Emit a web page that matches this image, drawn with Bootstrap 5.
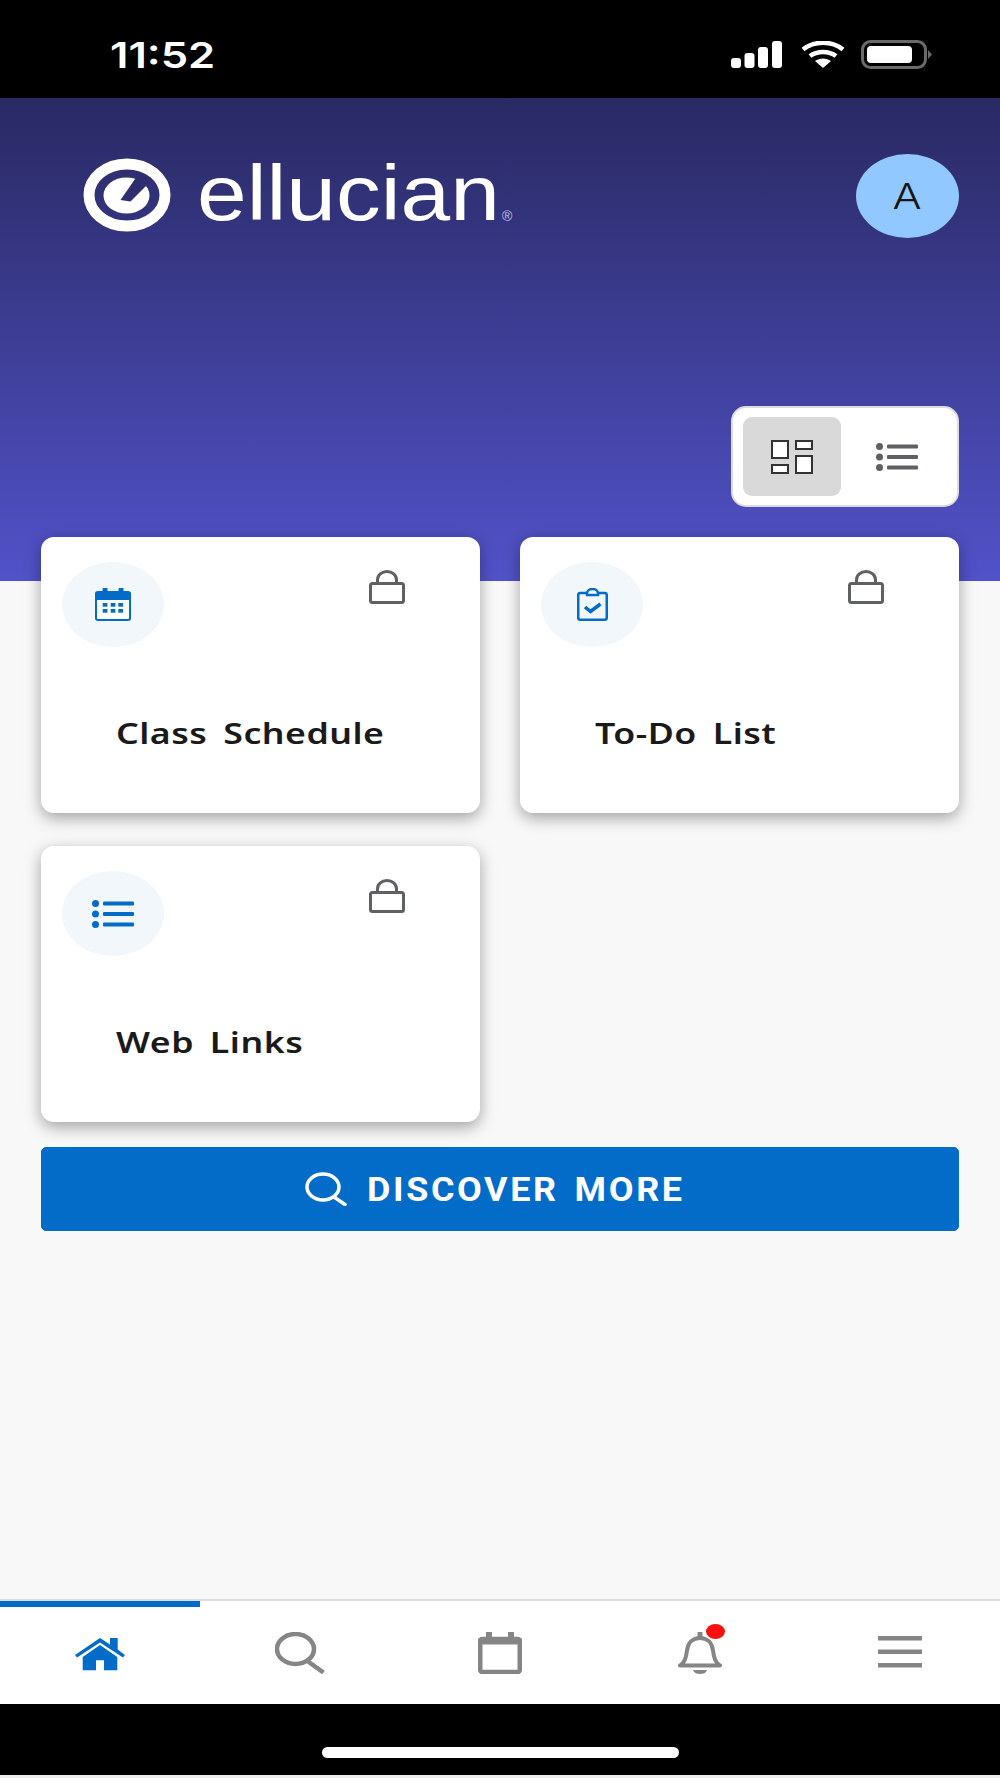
<!DOCTYPE html>
<html lang="en">
<head>
  <meta charset="UTF-8" />
  <meta name="viewport" content="width=device-width, initial-scale=1" />
  <title>Ellucian Experience</title>
  <link href="https://cdn.jsdelivr.net/npm/bootstrap@5.3.3/dist/css/bootstrap.min.css" rel="stylesheet" />
  <style>
    html, body { height: 1778px; }
    body { background: #f8f8f8; overflow: hidden; }
    svg { display: block; flex-shrink: 0; }
    /* the whole screenshot is stretched sideways, so text is widened to match */
    .wide-text { display: inline-block; transform-origin: left center; white-space: nowrap; text-align: left; }
    .status-bar { height: 98px; background: #000; padding: 11px 67px 0 110px; }
    .status-time { font: 600 36px/1 Inter, sans-serif; color: #fff; transform: scaleX(1.21); }
    .status-signal { margin-right: 3px; }
    .main-area {
      flex: 1 1 auto; padding: 56px 41px 0;
      background: linear-gradient(#292963, #5252c9) top / 100% 483px no-repeat, #f8f8f8;
    }
    .logo-row { height: 252px; }
    .logo-word { font: 400 78px/1 "Liberation Sans", sans-serif; color: #fff; transform: scaleX(1.145); width: 304px; margin-left: 26px; }
    .logo-mark { margin-left: 42px; margin-top: 4px; }
    .logo-reg { font: 400 14px/1 "Liberation Sans", sans-serif; color: #c5c5e6; margin-top: 55px; margin-left: 1px; }
    .avatar {
      width: 103px; height: 84px; border-radius: 50%; background: #90c8ff; color: #151515;
      font: 300 36px/1 Inter, sans-serif;
    }
    .avatar span { display: inline-block; transform: scaleX(1.2); }
    .view-toggle { width: 228px; height: 101px; background: #fff; border: 2px solid #ddd; border-radius: 15px; padding: 9px 11px 9px 10px; }
    .toggle-btn { width: 98px; height: 79px; border-radius: 9px; flex-shrink: 0; }
    .toggle-on { background: #d9d9d9; }
    .toggle-off { margin-left: 7px; }
    .tile-grid { display: grid; grid-template-columns: 439px 439px; column-gap: 40px; row-gap: 33px; margin-top: 30px; }
    .tile { height: 276px; background: #fff; border-radius: 13px; box-shadow: 0 5px 16px rgba(0,0,0,.35); padding: 25px 18px 0 21px; }
    .tile-icon { width: 102px; height: 85px; border-radius: 50%; background: #f2f7fc; }
    .tile-lock { margin-right: 57px; margin-top: 8px; }
    .tile-title { font: 600 29px/1 "Noto Sans", sans-serif; color: #1a1a1a; margin: 71px 0 0 54px; letter-spacing: .4px; word-spacing: 5px; transform: scaleX(1.23); }
    .discover-btn { --bs-btn-bg: #036bc8; --bs-btn-border-color: #036bc8; height: 84px; margin-top: 25px; border-radius: 5px; }
    .discover-btn span { font: 700 33px/1 Roboto, sans-serif; color: #fff; letter-spacing: 2.4px; word-spacing: 4px; transform: scaleX(1.09); width: 315px; margin: 0 13px 0 20px; }
    .tab-bar { height: 105px; background: #fff; border-top: 2px solid #ddd; }
    .tab-item { width: 200px; height: 103px; padding-top: 31px; }
    .tab-item.active { box-shadow: inset 0 6px 0 #036bc8; }
    .home-icon { margin-top: 6px; }
    .bell-dot { top: 23px; left: 106px; width: 19px; height: 15px; border-radius: 50%; background: #fb0f0f; }
    .home-area { height: 71px; background: #000; padding-top: 43px; }
    .home-pill { width: 357px; height: 11px; border-radius: 6px; background: #fff; }
    .screen-edge { height: 3px; background: #eee; }
  </style>
</head>
<body class="d-flex flex-column">

  <div class="status-bar d-flex justify-content-between align-items-center flex-shrink-0">
    <span class="status-time wide-text">11:52</span>
    <div class="d-flex align-items-center">
      <svg class="status-signal" width="51" height="27" viewBox="0 0 51 27" fill="#fff"><rect x="0" y="17" width="10" height="10" rx="3"/><rect x="13.500" y="12" width="10" height="15" rx="3"/><rect x="27" y="6" width="10" height="21" rx="3"/><rect x="41" y="0" width="10" height="27" rx="3"/></svg>
      <svg class="ms-3" width="44" height="27" viewBox="0 0 44 27"><g fill="none" stroke="#fff" stroke-width="4.500"><path d="M2 8.500C13-.5 31-.5 42 8.500"/><path d="M9 15C16 9.500 28 9.500 35 15"/></g><path d="M22 27L14 20C18.500 16.500 25.500 16.500 30 20Z" fill="#fff"/></svg>
      <svg class="ms-3" width="72" height="29" viewBox="0 0 72 29"><rect x="1.500" y="1.500" width="63" height="26" rx="8" fill="none" stroke="#6a6a6a" stroke-width="3"/><rect x="6" y="6" width="45" height="17" rx="4" fill="#fff"/><path d="M67 10l4 4.500-4 4.500z" fill="#6a6a6a"/></svg>
    </div>
  </div>

  <div class="main-area">
    <div class="logo-row d-flex justify-content-between align-items-start">
      <div class="d-flex align-items-start">
        <svg class="logo-mark" width="88" height="74" viewBox="0 0 88 74">
          <ellipse cx="44" cy="37" rx="38" ry="31" fill="none" stroke="#fff" stroke-width="11"/>
          <ellipse cx="43.500" cy="37.500" rx="23" ry="18" fill="#fff"/>
          <path d="M37.500 42L47.500 43.500L68 23L56.500 14.500Z" fill="#2e2e6e"/>
        </svg>
        <span class="logo-word wide-text">ellucian</span>
        <span class="logo-reg">®</span>
      </div>
      <div class="avatar d-flex align-items-center justify-content-center"><span>A</span></div>
    </div>

    <div class="d-flex justify-content-end">
      <div class="view-toggle d-flex">
        <div class="toggle-btn toggle-on d-flex align-items-center justify-content-center">
          <svg width="42" height="34" viewBox="0 0 42 34" fill="#fff" stroke="#333" stroke-width="2"><rect x="1" y="1" width="16" height="17"/><rect x="1" y="25" width="16" height="8"/><rect x="25" y="1" width="16" height="8"/><rect x="25" y="16" width="16" height="17"/></svg>
        </div>
        <div class="toggle-btn toggle-off d-flex align-items-center justify-content-center">
          <svg width="42" height="28" viewBox="0 0 42 28" fill="#5f6064"><circle cx="3.500" cy="3.500" r="3.500"/><circle cx="3.500" cy="14" r="3.500"/><circle cx="3.500" cy="24.500" r="3.500"/><rect x="11" y="1.500" width="31" height="4" rx="1"/><rect x="11" y="12" width="31" height="4" rx="1"/><rect x="11" y="22.500" width="31" height="4" rx="1"/></svg>
        </div>
      </div>
    </div>

    <div class="tile-grid">
      <div class="tile">
        <div class="d-flex justify-content-between align-items-start">
          <div class="tile-icon d-flex align-items-center justify-content-center">
            <svg width="36" height="33" viewBox="0 0 36 33"><rect x="1" y="4" width="34" height="28" rx="2" fill="#fff" stroke="#036bc8" stroke-width="2"/><path d="M0 6a2 2 0 0 1 2-2h32a2 2 0 0 1 2 2v6H0z" fill="#036bc8"/><rect x="7.500" y="0" width="5" height="6" rx="1" fill="#036bc8"/><rect x="23.500" y="0" width="5" height="6" rx="1" fill="#036bc8"/><g fill="#036bc8"><rect x="7.700" y="15" width="4.700" height="3.700"/><rect x="15.700" y="15" width="4.700" height="3.700"/><rect x="23.300" y="15" width="4.700" height="3.700"/><rect x="7.700" y="21" width="4.700" height="3.700"/><rect x="15.700" y="21" width="4.700" height="3.700"/><rect x="23.300" y="21" width="4.700" height="3.700"/></g></svg>
          </div>
          <svg class="tile-lock" width="36" height="34" viewBox="0 0 36 34" fill="none" stroke="#5f6064" stroke-width="3"><rect x="1.500" y="13.500" width="33" height="19" rx="2"/><path d="M8.500 13V10a9.500 8.500 0 0 1 19 0v3"/></svg>
        </div>
        <div class="tile-title wide-text">Class Schedule</div>
      </div>

      <div class="tile">
        <div class="d-flex justify-content-between align-items-start">
          <div class="tile-icon d-flex align-items-center justify-content-center">
            <svg width="31" height="33" viewBox="0 0 31 33" fill="none" stroke="#036bc8" stroke-width="2.500"><rect x="1.250" y="5" width="28.500" height="26.750" rx="2"/><path d="M10 5.500a5.500 4.500 0 0 1 11 0v1.500H10z" fill="#fff"/><path d="M8 19l5.500 4.500 10-7.500" stroke-width="3.500"/></svg>
          </div>
          <svg class="tile-lock" width="36" height="34" viewBox="0 0 36 34" fill="none" stroke="#5f6064" stroke-width="3"><rect x="1.500" y="13.500" width="33" height="19" rx="2"/><path d="M8.500 13V10a9.500 8.500 0 0 1 19 0v3"/></svg>
        </div>
        <div class="tile-title wide-text">To-Do List</div>
      </div>

      <div class="tile">
        <div class="d-flex justify-content-between align-items-start">
          <div class="tile-icon d-flex align-items-center justify-content-center">
            <svg width="42" height="28" viewBox="0 0 42 28" fill="#036bc8"><circle cx="3.500" cy="3.500" r="3.500"/><circle cx="3.500" cy="14" r="3.500"/><circle cx="3.500" cy="24.500" r="3.500"/><rect x="11" y="1.500" width="31" height="4" rx="1"/><rect x="11" y="12" width="31" height="4" rx="1"/><rect x="11" y="22.500" width="31" height="4" rx="1"/></svg>
          </div>
          <svg class="tile-lock" width="36" height="34" viewBox="0 0 36 34" fill="none" stroke="#5f6064" stroke-width="3"><rect x="1.500" y="13.500" width="33" height="19" rx="2"/><path d="M8.500 13V10a9.500 8.500 0 0 1 19 0v3"/></svg>
        </div>
        <div class="tile-title wide-text">Web Links</div>
      </div>
    </div>

    <button type="button" class="btn btn-primary discover-btn w-100 d-flex align-items-center justify-content-center">
      <svg width="42" height="34" viewBox="0 0 42 34" fill="none" stroke="#fff" stroke-width="3.500" stroke-linecap="round"><ellipse cx="18" cy="15" rx="16" ry="13"/><path d="M29 25l11 7.500"/></svg>
      <span class="wide-text">DISCOVER MORE</span>
    </button>
  </div>

  <div class="tab-bar d-flex flex-shrink-0">
    <div class="tab-item active d-flex justify-content-center">
      <svg class="home-icon" width="50" height="33" viewBox="0 0 50 33" fill="#036bc8"><path d="M7.700 19L25 7l17.300 12v13.300H29V22.300h-8v10H7.700z"/><path d="M0 17L25 0l10 6.500V0h7.700v11.500L50 17l-2 2.500L25 4.500 2 19.500z"/></svg>
    </div>
    <div class="tab-item d-flex justify-content-center">
      <svg width="50" height="42" viewBox="0 0 50 42" fill="none" stroke="#858585" stroke-width="4.500"><ellipse cx="20.500" cy="17" rx="18.500" ry="15"/><path d="M33 29.500l15.500 11"/></svg>
    </div>
    <div class="tab-item d-flex justify-content-center">
      <svg width="44" height="42" viewBox="0 0 44 42" fill="none" stroke="#858585" stroke-width="4.500"><rect x="2.250" y="7" width="39.500" height="33" rx="2"/><path d="M0 9.500h44" stroke-width="6"/><path d="M11 0v7M33 0v7" stroke-width="6"/></svg>
    </div>
    <div class="tab-item d-flex justify-content-center position-relative">
      <svg width="44" height="42" viewBox="0 0 44 42" fill="none" stroke="#858585" stroke-width="4"><path d="M2 33.500c5-3 6-8 7-15 1-8 6-12.500 13-12.500s12 4.500 13 12.500c1 7 2 12 7 15z" stroke-linejoin="round"/><path d="M22 0v5" stroke-width="5"/><path d="M15 38h14c-1 3-4 4-7 4s-6-1-7-4z" fill="#858585" stroke="none"/></svg>
      <span class="bell-dot position-absolute"></span>
    </div>
    <div class="tab-item d-flex justify-content-center">
      <svg class="mt-1" width="44" height="32" viewBox="0 0 44 32" fill="#858585"><rect y="0" width="44" height="4.500"/><rect y="13.500" width="44" height="4.500"/><rect y="27" width="44" height="4.500"/></svg>
    </div>
  </div>

  <div class="home-area d-flex justify-content-center flex-shrink-0">
    <div class="home-pill"></div>
  </div>
  <div class="screen-edge flex-shrink-0"></div>

</body>
</html>
